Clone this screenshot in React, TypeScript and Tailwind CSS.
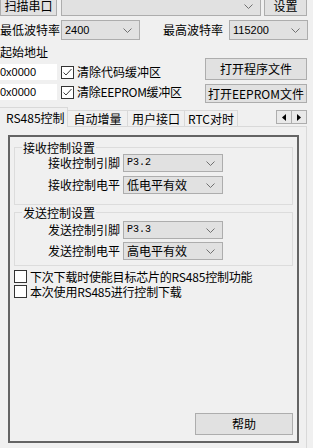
import React from 'react';

const Chevron: React.FC = () => (
  <svg width="9" height="5" viewBox="0 0 9 5" className="shrink-0">
    <path d="M0.5 0.5 L4.5 4.5 L8.5 0.5" fill="none" stroke="#707070" strokeWidth="1" />
  </svg>
);

const Combo: React.FC<{ value?: string; className: string; textClass?: string }> = ({ value, className, textClass }) => (
  <div className={`flex items-center justify-between bg-[#e1e1e1] border border-[#adadad] pl-[3px] pr-[7px] ${className}`}>
    <span className={textClass ?? "font-['Noto_Sans_CJK_SC'] text-[12px] leading-[14px]"}>{value}</span>
    <Chevron />
  </div>
);

const Btn: React.FC<{ label: string; className: string }> = ({ label, className }) => (
  <div className={`flex items-center justify-center bg-[#e1e1e1] border border-[#adadad] text-[12px] leading-[14px] ${className}`}>
    {label}
  </div>
);

const Check: React.FC<{ checked?: boolean }> = ({ checked }) => (
  <div className="w-[13px] h-[13px] bg-white border border-[#333333] flex items-center justify-center shrink-0">
    {checked && (
      <svg width="11" height="11" viewBox="0 0 11 11">
        <path d="M1.5 5.5 L4 8 L9.5 2" fill="none" stroke="#3c3c3c" strokeWidth="1" />
      </svg>
    )}
  </div>
);

const Row: React.FC<{ label: string; value: string; mono?: boolean; className?: string }> = ({ label, value, mono, className }) => (
  <div className={`flex items-center h-[18px] ${className ?? ''}`}>
    <span className="w-[105px] text-right text-[12px] leading-[14px]">{label}</span>
    <Combo
      value={value}
      className="ml-[3px] w-[100px] h-[18px]"
      textClass={mono ? "font-['Liberation_Mono'] text-[10px] leading-[12px]" : undefined}
    />
  </div>
);

export default function App() {
  return (
    <div className="w-[313px] h-[448px] overflow-hidden bg-[#f0f0f0] text-black font-['Noto_Sans_CJK_SC',sans-serif] flex flex-col">
      {/* top toolbar */}
      <div className="flex items-end h-[16px] shrink-0">
        <Btn label="扫描串口" className="w-[57px] h-[20px]" />
        <Combo className="ml-[4px] w-[200px] h-[20px]" />
        <Btn label="设置" className="ml-[3px] w-[43px] h-[20px]" />
      </div>

      <div className="flex items-center h-[20px] mt-[4px] shrink-0">
        <span className="w-[61px] text-[12px] leading-[14px]">最低波特率</span>
        <Combo value="2400" className="w-[79px] h-[20px]" textClass="font-['Liberation_Sans'] text-[11px] leading-[13px]" />
        <span className="w-[89px] text-right pr-[6px] text-[12px] leading-[14px]">最高波特率</span>
        <Combo value="115200" className="w-[79px] h-[20px]" textClass="font-['Liberation_Sans'] text-[11px] leading-[13px]" />
      </div>

      <div className="h-[13px] mt-[5px] text-[12px] leading-[13px] shrink-0">起始地址</div>

      <div className="flex items-end h-[22px] shrink-0">
        <div className="w-[57px] h-[16px] bg-white flex items-center font-['Liberation_Sans'] text-[11px] leading-[13px]">0x0000</div>
        <div className="flex items-center h-[16px] ml-[4px]">
          <Check checked />
          <span className="ml-[3px] text-[12px] leading-[14px]">清除代码缓冲区</span>
        </div>
        <Btn label="打开程序文件" className="ml-auto mr-[6px] w-[102px] h-[22px]" />
      </div>

      <div className="flex items-start h-[19px] mt-[4px] shrink-0">
        <div className="w-[57px] h-[16px] bg-white flex items-center font-['Liberation_Sans'] text-[11px] leading-[13px]">0x0000</div>
        <div className="flex items-center h-[16px] ml-[4px]">
          <Check checked />
          <span className="ml-[3px] text-[12px] leading-[14px] tracking-[-0.3px]">清除EEPROM缓冲区</span>
        </div>
        <Btn label="打开EEPROM文件" className="ml-auto mr-[6px] w-[102px] h-[19px]" />
      </div>

      {/* tab control */}
      <div className="w-[307px] mt-[4px] flex-1 flex flex-col">
        <div className="flex items-start h-[20px] text-[12px] leading-[14px]">
          <div className="relative z-10 w-[68px] h-[20px] bg-[#f0f0f0] border-t border-r border-[#d9d9d9] flex items-center pl-[6px]">
            RS485控制
          </div>
          <div className="mt-[3px] w-[60px] h-[17px] border-t border-r border-[#d9d9d9] flex items-center justify-center">自动增量</div>
          <div className="mt-[3px] w-[57px] h-[17px] border-t border-r border-[#d9d9d9] flex items-center justify-center">用户接口</div>
          <div className="mt-[3px] w-[53px] h-[17px] border-t border-r border-[#d9d9d9] flex items-center justify-center">RTC对时</div>
          <div className="ml-auto mt-[3px] flex">
            <div className="w-[16px] h-[14px] border border-[#adadad] bg-[#e9e9e9] flex items-center justify-center">
              <svg width="4" height="7" viewBox="0 0 4 7"><path d="M4 0 L0 3.5 L4 7 Z" fill="#000" /></svg>
            </div>
            <div className="w-[15px] h-[14px] border border-l-0 border-[#adadad] bg-[#e9e9e9] flex items-center justify-center">
              <svg width="4" height="7" viewBox="0 0 4 7"><path d="M0 0 L4 3.5 L0 7 Z" fill="#000" /></svg>
            </div>
          </div>
        </div>

        <div className="flex-1 -mt-px border-t border-r border-[#d9d9d9] bg-[#f0f0f0] pt-[8px]">
          <div className="ml-[8px] w-[291px] h-[308px] border-2 border-[#646464] flex flex-col text-[12px] leading-[14px]">
            <fieldset className="ml-[4px] mt-[4px] w-[279px] border border-[#dcdcdc] pb-[10px]">
              <legend className="ml-[7px] px-[1px] leading-[13px]">接收控制设置</legend>
              <Row label="接收控制引脚" value="P3.2" mono />
              <Row label="接收控制电平" value="低电平有效" className="mt-[4px]" />
            </fieldset>

            <fieldset className="ml-[4px] mt-[1px] w-[279px] border border-[#dcdcdc] pb-[5px]">
              <legend className="ml-[7px] px-[1px] leading-[13px]">发送控制设置</legend>
              <Row label="发送控制引脚" value="P3.3" mono className="mt-[2px]" />
              <Row label="发送控制电平" value="高电平有效" className="mt-[3px]" />
            </fieldset>

            <div className="ml-[4px] mt-[3px] flex items-center h-[15px]">
              <Check />
              <span className="ml-[3px] leading-[13px] tracking-[-0.2px]">下次下载时使能目标芯片的RS485控制功能</span>
            </div>
            <div className="ml-[4px] flex items-center h-[15px]">
              <Check />
              <span className="ml-[3px] leading-[13px] tracking-[-0.2px]">本次使用RS485进行控制下载</span>
            </div>

            <Btn label="帮助" className="mt-auto self-end mr-[4px] mb-[6px] w-[98px] h-[22px]" />
          </div>
        </div>
      </div>
    </div>
  );
}
